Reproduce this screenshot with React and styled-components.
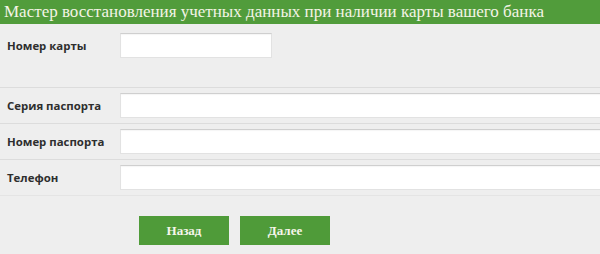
import React from 'react';
import styled, { createGlobalStyle } from 'styled-components';

const Global = createGlobalStyle`
    html, body {
        margin: 0;
        padding: 0;
        background: #eeeeee;
        overflow: hidden;
    }
`

const Page = styled.div`
    width: 600px;
    height: 254px;
    background: #eeeeee;
    font-family: "Open Sans", "Liberation Sans", sans-serif;
`

const Title = styled.div`
    height: 24px;
    background: #519c3b;
    color: #f4f4e6;
    font-family: "Liberation Serif", serif;
    font-size: 17px;
    line-height: 23px;
    padding-left: 4px;
    white-space: nowrap;
    overflow: hidden;
`

const Row = styled.div`
    box-sizing: border-box;
    display: flex;
    align-items: center;
    height: ${p => p.first ? '33px' : '36px'};
    padding-top: ${p => p.first ? '9px' : '0'};
    border-top: ${p => p.first ? 'none' : '1px solid #dcdcdc'};
    margin-bottom: ${p => p.first ? '30px' : '0'};
`

const Label = styled.label`
    flex-shrink: 0;
    width: 113px;
    padding-left: 7px;
    font-size: 11.4px;
    font-weight: 700;
    color: #2e2e2e;
`

const Input = styled.input`
    box-sizing: border-box;
    height: 25px;
    width: ${p => p.short ? '152px' : '490px'};
    flex-shrink: 0;
    margin: 0;
    border: 1px solid #e2e2e2;
    border-top-color: #cfcfcf;
    background: #ffffff;
    box-shadow: inset 0 1px 1px rgba(0,0,0,0.04);
    outline: none;
`

const Last = styled.div`
    border-top: 1px solid #e4e4e4;
`

const Buttons = styled.div`
    display: flex;
    gap: 11px;
    padding: 20px 0 0 139px;
`

const Button = styled.button`
    width: 90px;
    height: 29px;
    border: none;
    background: #4f9b39;
    color: #f6f6ea;
    font-family: "Liberation Serif", serif;
    font-size: 13px;
    font-weight: 700;
    cursor: pointer;
`

function App() {
    return (
        <Page>
            <Global/>
            <Title>Мастер восстановления учетных данных при наличии карты вашего банка</Title>
            <Row first>
                <Label>Номер карты</Label>
                <Input short/>
            </Row>
            <Row>
                <Label>Серия паспорта</Label>
                <Input/>
            </Row>
            <Row>
                <Label>Номер паспорта</Label>
                <Input/>
            </Row>
            <Row>
                <Label>Телефон</Label>
                <Input/>
            </Row>
            <Last/>
            <Buttons>
                <Button>Назад</Button>
                <Button>Далее</Button>
            </Buttons>
        </Page>
    )
}

export default App
